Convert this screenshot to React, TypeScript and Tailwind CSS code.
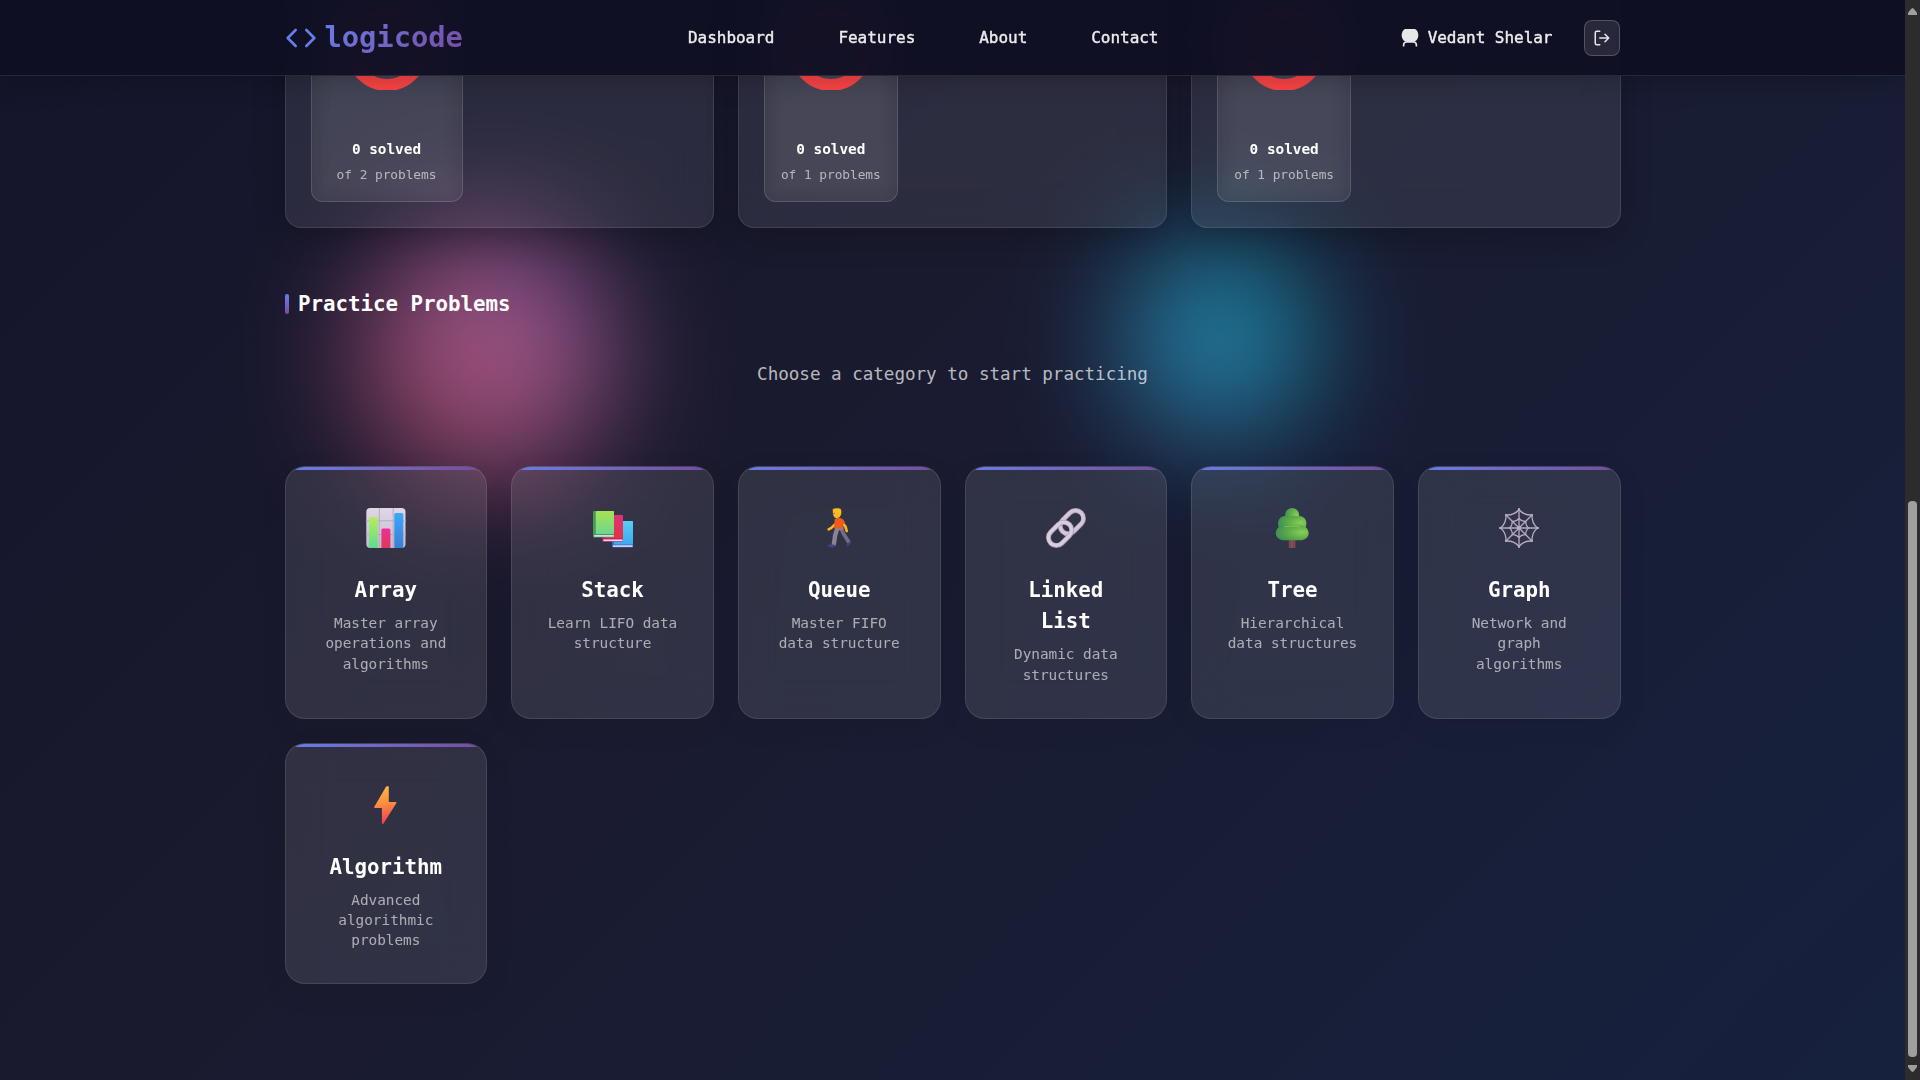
import type { ReactNode } from "react";

const ringCards = [
  { total: 2, width: "w-[152px]" },
  { total: 1, width: "w-[134px]" },
  { total: 1, width: "w-[134px]" },
];

function ChartIcon() {
  return (
    <svg width="40" height="40" viewBox="0 0 40 40">
      <defs>
        <linearGradient id="barGreen" x1="0" y1="0" x2="0" y2="1">
          <stop offset="0" stopColor="#b4ee5c" />
          <stop offset="1" stopColor="#5fdc8c" />
        </linearGradient>
        <linearGradient id="barPink" x1="0" y1="0" x2="0" y2="1">
          <stop offset="0" stopColor="#ee2f92" />
          <stop offset="1" stopColor="#de3a5c" />
        </linearGradient>
        <linearGradient id="barBlue" x1="0" y1="0" x2="0" y2="1">
          <stop offset="0" stopColor="#38a9fb" />
          <stop offset="1" stopColor="#3c7fd0" />
        </linearGradient>
        <linearGradient id="chartBack" x1="0" y1="0" x2="0" y2="1">
          <stop offset="0" stopColor="#dfd8e6" />
          <stop offset="1" stopColor="#c6b8d4" />
        </linearGradient>
      </defs>
      <rect x="0.3" y="0" width="39.2" height="40" rx="4" fill="url(#chartBack)" />
      <path d="M13.3 0v40M27.2 0v40M0 12.8h40M0 26.6h40" stroke="#b5acbf" strokeWidth="1" />
      <path d="M3 40V10.5q0-1.5 1.5-1.5h5.800q1.500 0 1.500 1.500V40z" fill="url(#barGreen)" />
      <path d="M15.400 40V22q0-1.500 1.500-1.500h6q1.500 0 1.500 1.500v18z" fill="url(#barPink)" />
      <path d="M28.300 40V6.500q0-1.500 1.500-1.500h6q1.500 0 1.500 1.500V40z" fill="url(#barBlue)" />
    </svg>
  );
}

function BooksIcon() {
  return (
    <svg className="translate-x-px" width="40" height="40" viewBox="0 0 40 40">
      <defs>
        <linearGradient id="bookGreen" x1="0" y1="0" x2="0" y2="1">
          <stop offset="0" stopColor="#a6e34f" />
          <stop offset="1" stopColor="#6fd592" />
        </linearGradient>
        <linearGradient id="bookPink" x1="0" y1="0" x2="0" y2="1">
          <stop offset="0" stopColor="#e0307c" />
          <stop offset="1" stopColor="#e03443" />
        </linearGradient>
        <linearGradient id="bookBlue" x1="0" y1="0" x2="0" y2="1">
          <stop offset="0" stopColor="#55d0f4" />
          <stop offset="1" stopColor="#3fa8f2" />
        </linearGradient>
      </defs>
      <rect x="19" y="13" width="21" height="26.6" rx="1" fill="#356fc9" />
      <rect x="21" y="13" width="19" height="23.5" rx="0.8" fill="url(#bookBlue)" />
      <rect x="20" y="37.3" width="19.6" height="1.6" fill="#e3d8f0" />
      <rect x="9" y="7" width="21" height="26.8" rx="1" fill="#b01857" />
      <rect x="11" y="7" width="19" height="23.5" rx="0.8" fill="url(#bookPink)" />
      <rect x="10.3" y="31.4" width="19.4" height="1.8" fill="#ead8ef" />
      <rect x="0" y="3" width="21" height="26.6" rx="1" fill="#459c54" />
      <rect x="2.8" y="3" width="18.2" height="23" rx="0.8" fill="url(#bookGreen)" />
      <rect x="1.2" y="27" width="19.6" height="1.8" fill="#dcd4ee" />
    </svg>
  );
}

function WalkerIcon() {
  return (
    <svg width="40" height="40" viewBox="0 0 40 40" fill="none" strokeLinecap="round" strokeLinejoin="round">
      <path d="M22 20l2.600 6 5.200 8" stroke="#756b82" strokeWidth="3.800" />
      <path d="M18.400 20l-2.300 7.500-1.200 8.500" stroke="#8c8298" strokeWidth="4.400" />
      <path d="M20 20h2.500" stroke="#8c8298" strokeWidth="4.400" />
      <path d="M8.600 37.200c1.800-.8 3.400-1 4.600-.8l2.600.4c.2 1.600-.6 2.600-2.200 2.600-2.400 0-4.400-.2-5-2.200z" fill="#464084" />
      <path d="M27.600 38.600c0-1.700.9-2.900 1.800-3.800l1.800-1.800c1 .7 1 1.600.2 2.800-1.100 1.600-2.300 2.800-3.800 2.800z" fill="#464084" />
      <path d="M15.800 16.500l-3.400 3.300-2.800 1.600" stroke="#fcb71f" strokeWidth="2.500" />
      <path d="M22.500 14l4 4.600 1.200 4.400" stroke="#fcb71f" strokeWidth="2.700" />
      <path d="M15.500 11.500c1.500-1.700 6-2 8-.4 1.600 1.200 2.300 3 2.600 4.500l-2.700 1.300-.3 3.600h-7.900c-.4-3 .8-5.500.3-9z" fill="#f05a1d" />
      <path d="M13.700 1.200C16 0 20.700 0 22 1.400c.8 2.400.5 5.600-1.500 7.800-1.300 1.200-4.300 1-5.300-.2-1-1.700-1.500-5-1.500-7.800z" fill="#fdbb1c" />
      <path d="M13.600 4.600l1.900-.8.7 3-1.600 1z" fill="#f5a55c" />
      <circle cx="15" cy="5.500" r="0.700" fill="#8a6d63" />
    </svg>
  );
}

function LinkIcon() {
  return (
    <svg width="40" height="40" viewBox="0 0 40 40" fill="none">
      <g transform="rotate(-45 20 20)">
        <rect x="15.100" y="12.100" width="26.400" height="15.800" rx="7.900" stroke="#b09fbd" strokeWidth="4.900" />
        <rect x="15" y="11.900" width="26.400" height="15.800" rx="7.900" stroke="#d3c7d9" strokeWidth="3.300" />
        <rect x="-1.500" y="12.100" width="26.400" height="15.800" rx="7.900" stroke="#b09fbd" strokeWidth="4.900" />
        <rect x="-1.600" y="11.900" width="26.400" height="15.800" rx="7.900" stroke="#d9cedd" strokeWidth="3.300" />
      </g>
    </svg>
  );
}

function TreeIcon() {
  return (
    <svg width="40" height="40" viewBox="0 0 40 40">
      <defs>
        <radialGradient id="leaf" cx="0.800" cy="0.450" r="0.800">
          <stop offset="0" stopColor="#86cf58" />
          <stop offset="0.550" stopColor="#5eab48" />
          <stop offset="1" stopColor="#3f9154" />
        </radialGradient>
      </defs>
      <rect x="16.700" y="29" width="6.800" height="11" fill="#75484c" />
      <path d="M20 31v9" stroke="#8d5c57" strokeWidth="1" />
      <rect x="13" y="0" width="14.200" height="16" rx="7.100" fill="url(#leaf)" />
      <rect x="6" y="8" width="28.400" height="15" rx="7" fill="url(#leaf)" />
      <rect x="3.700" y="17.800" width="33" height="14.400" rx="7.200" fill="url(#leaf)" />
      <path d="M12 18.800q8-1.500 16 0" stroke="#83cd5b" strokeWidth="0.800" fill="none" />
    </svg>
  );
}

function WebIcon() {
  return (
    <svg width="40" height="40" viewBox="0 0 40 40" fill="none" stroke="#b9aac5" strokeLinecap="round">
      <path d="M20 1v38M1 20h38M7 7l26 26M33 7L7 33" strokeWidth="1.300" />
      <path
        d="M20 1.500Q24.500 7.300 33 7 32.700 15.500 38.500 20 32.700 24.500 33 33 24.500 32.700 20 38.500 15.500 32.700 7 33 7.300 24.500 1.500 20 7.300 15.500 7 7 15.500 7.300 20 1.500z"
        strokeWidth="1.300"
      />
      <path
        d="M20 10.500Q22.500 13.500 26.700 13.300 26.500 17.500 29.500 20 26.500 22.500 26.700 26.700 22.500 26.500 20 29.500 17.500 26.500 13.300 26.700 13.500 22.500 10.500 20 13.500 17.500 13.300 13.300 17.500 13.500 20 10.500z"
        strokeWidth="1.200"
      />
      <circle cx="20" cy="20" r="1.500" fill="#b9aac5" />
      <path d="M20 1v1M20 38v1M1 20h1M38 20h1M7 7l.1.100M33 7l-.1.100M33 33l-.1-.100M7 33l.1-.100" strokeWidth="2" />
    </svg>
  );
}

function BoltIcon() {
  return (
    <svg width="40" height="40" viewBox="0 0 40 40">
      <defs>
        <linearGradient id="bolt" x1="0.400" y1="0" x2="0.500" y2="1">
          <stop offset="0" stopColor="#ffb64a" />
          <stop offset="0.450" stopColor="#fd8f3f" />
          <stop offset="1" stopColor="#f03a55" />
        </linearGradient>
      </defs>
      <path
        d="M20.800 1.200h1.200c.6 0 .8.400.8.900v15h6.900c.8 0 1 .6.600 1.200L17.700 38.200c-.2.500-.6.700-1.100.7-.5 0-.7-.4-.7-.9V23H8.900c-.8 0-1-.6-.6-1.200L20 1.800c.2-.4.400-.6.800-.6z"
        fill="url(#bolt)"
      />
    </svg>
  );
}

const categories: { title: string; text: string; icon: ReactNode }[] = [
  { title: "Array", text: "Master array operations and algorithms", icon: <ChartIcon /> },
  { title: "Stack", text: "Learn LIFO data structure", icon: <BooksIcon /> },
  { title: "Queue", text: "Master FIFO data structure", icon: <WalkerIcon /> },
  { title: "Linked List", text: "Dynamic data structures", icon: <LinkIcon /> },
  { title: "Tree", text: "Hierarchical data structures", icon: <TreeIcon /> },
  { title: "Graph", text: "Network and graph algorithms", icon: <WebIcon /> },
  { title: "Algorithm", text: "Advanced algorithmic problems", icon: <BoltIcon /> },
];

function Header() {
  return (
    <header className="absolute inset-x-0 top-0 z-20 h-[76px] border-b border-white/10 bg-[#0f0f23]/95 shadow-[0_4px_24px_rgba(0,0,0,0.22)] backdrop-blur-[20px]">
      <div className="mx-auto flex h-[75px] w-[1336px] items-center justify-between">
        <div className="flex items-center gap-2">
          <svg width="32" height="32" viewBox="0 0 24 24" fill="none" stroke="#667eea" strokeWidth="2" strokeLinecap="round" strokeLinejoin="round">
            <path d="M16 18l6-6-6-6M8 6l-6 6 6 6" />
          </svg>
          <span className="bg-linear-135 from-[#667eea] to-[#764ba2] bg-clip-text text-[28.8px] leading-[43px] font-bold tracking-[-0.05px] text-transparent">
            logicode
          </span>
        </div>
        <nav className="-ml-[17px] flex gap-16 text-base font-normal text-white/90 [-webkit-text-stroke:0.45px_rgba(255,255,255,0.8)]">
          <a>Dashboard</a>
          <a>Features</a>
          <a>About</a>
          <a>Contact</a>
        </nav>
        <div className="flex items-center">
          <svg className="mr-[9px]" width="18" height="18" viewBox="0 0 18 18" fill="none">
            <path d="M4 0h10c2.200 1.200 3.300 3.400 3.300 6.200 0 4-3 6.800-5.600 6.800H6.300C3.700 13 .7 10.200.7 6.200.7 3.400 1.800 1.200 4 0z" fill="#e7e7e9" />
            <path d="M2.600 17.600v-1.400c0-2 1.200-3.200 3-3.200h6.800c1.800 0 3 1.200 3 3.200v1.400" stroke="#e7e7e9" strokeWidth="1.600" />
          </svg>
          <span className="text-base text-white/90 [-webkit-text-stroke:0.45px_rgba(255,255,255,0.8)]">Vedant Shelar</span>
          <button className="ml-8 flex size-9 items-center justify-center rounded-lg border border-white/20 bg-white/10">
            <svg width="18" height="18" viewBox="0 0 24 24" fill="none" stroke="#e7e7e9" strokeWidth="2" strokeLinecap="round" strokeLinejoin="round">
              <path d="M9 21H5a2 2 0 0 1-2-2V5a2 2 0 0 1 2-2h4M16 17l5-5-5-5M21 12H9" />
            </svg>
          </button>
        </div>
      </div>
    </header>
  );
}

function StatCard({ total, width }: { total: number; width: string }) {
  return (
    <div className="flex h-[228px] items-end rounded-b-2xl border border-t-0 border-white/10 bg-white/[0.085] p-[25px] shadow-[0_8px_32px_rgba(0,0,0,0.22)] backdrop-blur-[20px]">
      <div
        className={`${width} flex h-[202px] flex-col items-center rounded-b-xl border border-t-0 border-white/10 bg-white/[0.12] pt-[10px] shadow-[inset_0_0_18px_rgba(20,15,30,0.22)]`}
      >
        <svg width="80" height="80" viewBox="0 0 80 80">
          <circle cx="40" cy="40" r="35" fill="none" stroke="#fa4444" strokeWidth="12" />
        </svg>
        <div className="mt-[49px] text-[14.4px] leading-[21.6px] font-bold">0 solved</div>
        <div className="mt-1 text-[12.8px] leading-[19.2px] text-white/60">of {total} problems</div>
      </div>
    </div>
  );
}

function Scrollbar() {
  return (
    <div className="flex w-[15px] flex-col items-center bg-[#2c2c2c]">
      <svg width="9" height="7" viewBox="0 0 9 7" className="mt-2">
        <path d="M4.500 0Q5.500 0 9 5v2H0V5Q3.500 0 4.500 0z" fill="#9f9f9f" />
      </svg>
      <div className="mt-[486px] h-[556px] w-[9px] rounded-[4px] bg-[#9f9f9f]" />
      <svg width="9" height="7" viewBox="0 0 9 7" className="mt-2">
        <path d="M4.500 7Q5.500 7 9 2V0H0v2Q3.500 7 4.500 7z" fill="#9f9f9f" />
      </svg>
    </div>
  );
}

export default function App() {
  return (
    <div className="flex h-[1080px] w-full overflow-hidden font-['DejaVu_Sans_Mono','Liberation_Mono',monospace] tracking-[-0.03px] text-white">
      <div className="relative flex-1 overflow-hidden bg-[linear-gradient(135deg,#13152b_0%,#1a1a2e_38%,#16213e_100%)]">
        <div className="absolute top-[230px] left-[360px] size-[250px] rounded-full bg-[linear-gradient(45deg,#f5576c,#f093fb)] opacity-60 blur-[60px]" />
        <div className="absolute top-[245px] left-[1123px] size-[190px] rounded-full bg-[linear-gradient(45deg,#4facfe,#00f2fe)] opacity-[0.57] blur-[60px]" />
        <Header />
        <main className="relative mx-auto w-[1336px]">
          <section className="grid grid-cols-3 gap-6">
            {ringCards.map((card, i) => (
              <StatCard key={i} total={card.total} width={card.width} />
            ))}
          </section>
          <section className="pt-[60px]">
            <h2 className="flex items-center gap-[9.600px] text-[20.8px] leading-8 font-bold">
              <span className="h-5 w-1 rounded-sm bg-linear-to-b from-[#667eea] to-[#764ba2]" />
              Practice Problems
            </h2>
            <p className="mt-[41px] text-center text-[17.6px] leading-[26.4px] text-white/70">Choose a category to start practicing</p>
            <div className="mt-[78.600px] grid grid-cols-6 gap-6">
              {categories.map((c) => (
                <div
                  key={c.title}
                  className="relative overflow-hidden rounded-[20px] border border-white/10 bg-white/10 p-8 text-center shadow-[0_8px_32px_rgba(0,0,0,0.06)] backdrop-blur-[20px]"
                >
                  <div className="absolute inset-x-0 top-0 h-[3px] bg-linear-to-r from-[#667eea] to-[#764ba2]" />
                  <div className="mb-4 flex h-[60px] items-center justify-center pb-[2px]">{c.icon}</div>
                  <h3 className="mb-[7px] text-[20.8px] leading-[31.2px] font-bold">{c.title}</h3>
                  <p className="mb-px text-[14.4px] leading-[20.16px] text-white/60">{c.text}</p>
                </div>
              ))}
            </div>
          </section>
        </main>
      </div>
      <Scrollbar />
    </div>
  );
}
